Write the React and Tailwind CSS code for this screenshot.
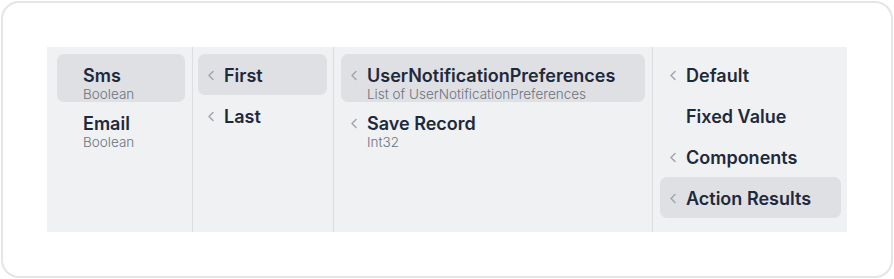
import React from "react";

const Chevron = () => (
  <svg width="8" height="11" viewBox="0 0 8 11" className="block">
    <path d="M6 1.5 L2 5.5 L6 9.5" fill="none" stroke="#a0a5ad" strokeWidth="1.5" strokeLinecap="round" strokeLinejoin="round" />
  </svg>
);

function Item({ title, sub, chevron = true, selected = false }) {
  return (
    <div
      className={`flex items-start rounded-[7px] pl-[9px] pt-[10.5px] ${sub ? "h-[48px]" : "h-[41px]"} ${selected ? "bg-[#dfe0e4]" : ""}`}
    >
      <div className="w-[17px] shrink-0 h-[22px] flex items-center">{chevron && <Chevron />}</div>
      <div className="flex flex-col">
        <div className="text-[18px] leading-[22px] font-semibold text-[#1e293b] whitespace-nowrap">{title}</div>
        {sub && <div className="text-[13.5px] leading-[14px] font-light text-[#6b7280] whitespace-nowrap">{sub}</div>}
      </div>
    </div>
  );
}

export default function App() {
  return (
    <div className="w-[894px] h-[279px] p-px bg-white" style={{ fontFamily: "Inter, 'Noto Sans', sans-serif" }}>
      <div className="h-full rounded-[18px] border-2 border-[#e3e5e8] bg-white pt-[44px] pl-[44px]">
        <div className="flex w-[800px] h-[185px] bg-[#f0f1f3]">
          <div className="w-[146px] border-r border-[#dcdde1] pl-[10px] pr-[7px] pt-[7px]">
            <Item title="Sms" sub="Boolean" chevron={false} selected />
            <Item title="Email" sub="Boolean" chevron={false} />
          </div>
          <div className="w-[141px] border-r border-[#dcdde1] pl-[5px] pr-[6px] pt-[7px]">
            <Item title="First" selected />
            <Item title="Last" />
          </div>
          <div className="w-[319px] border-r border-[#dcdde1] pl-[7px] pr-[7px] pt-[7px]">
            <Item title="UserNotificationPreferences" sub="List of UserNotificationPreferences" selected />
            <Item title="Save Record" sub="Int32" />
          </div>
          <div className="flex-1 pl-[7px] pr-[6px] pt-[7px]">
            <Item title="Default" />
            <Item title="Fixed Value" chevron={false} />
            <Item title="Components" />
            <Item title="Action Results" selected />
          </div>
        </div>
      </div>
    </div>
  );
}
